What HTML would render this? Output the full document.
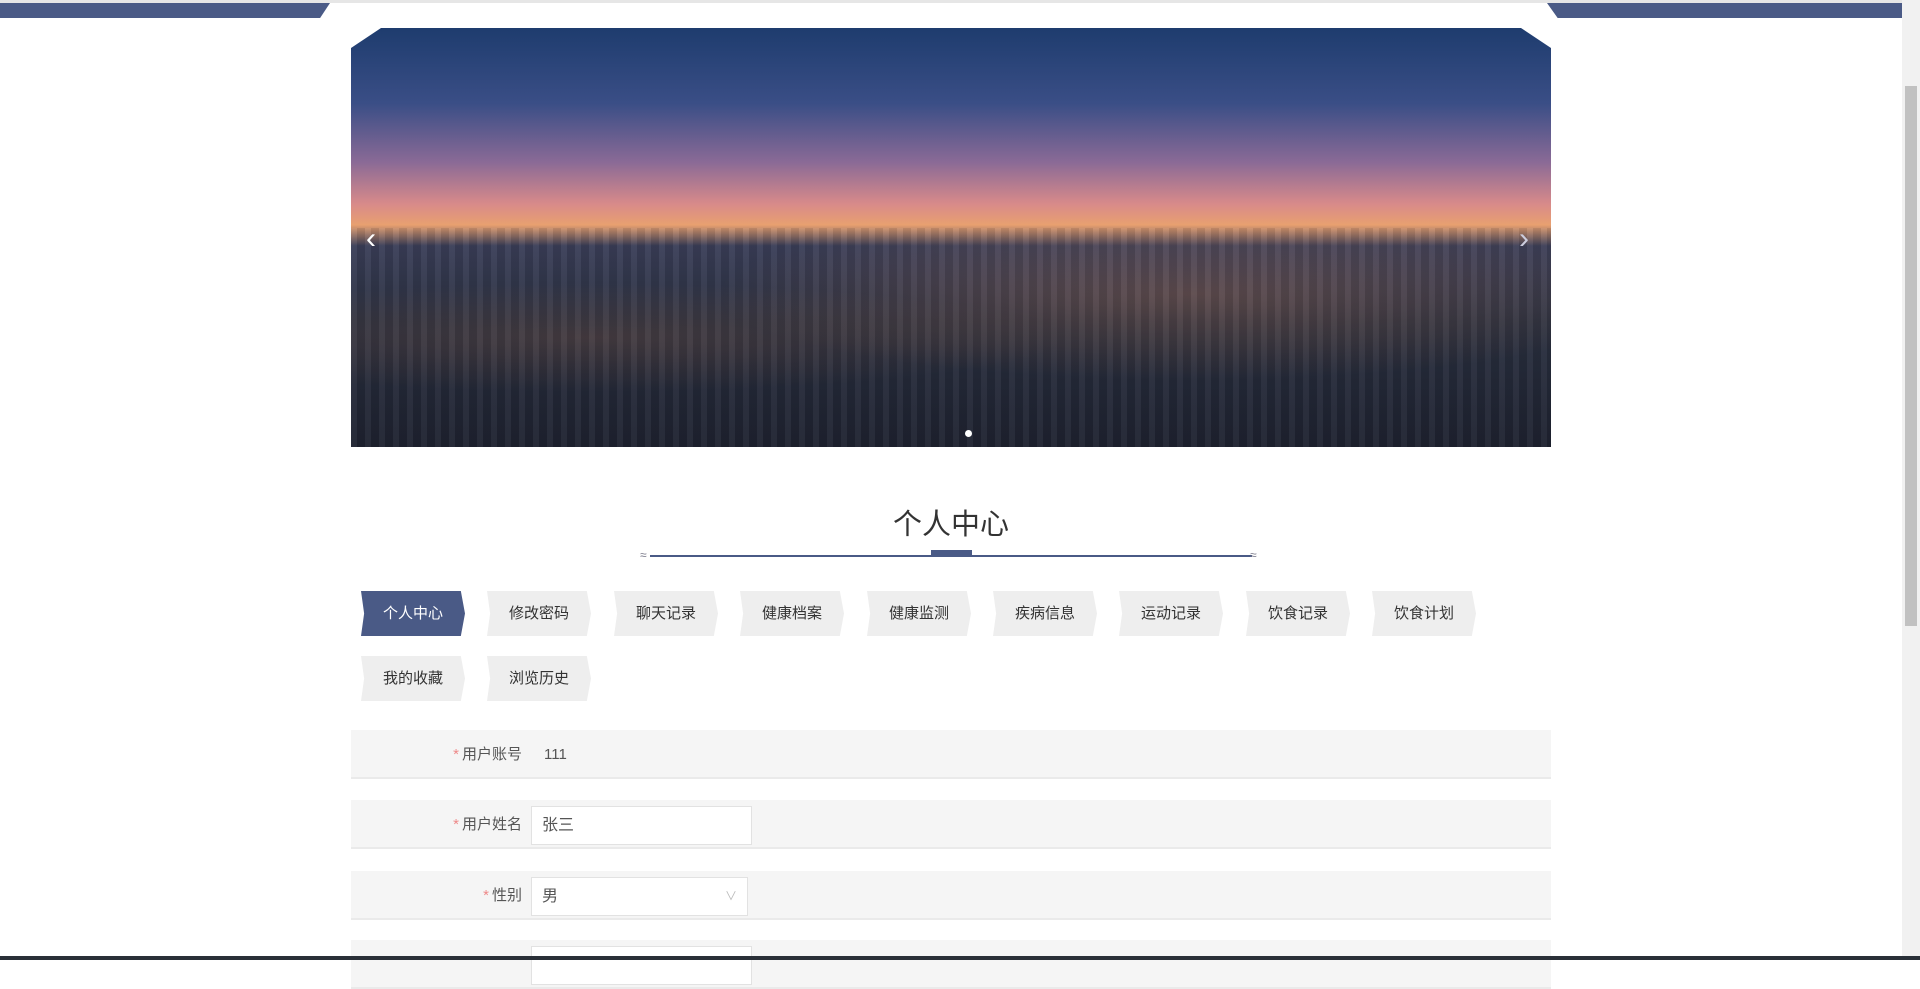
<!DOCTYPE html>
<html><head><meta charset="utf-8"><style>
*{margin:0;padding:0;box-sizing:border-box}
body{width:1920px;height:960px;overflow:hidden;background:#fff;font-family:"Liberation Sans","Noto Sans CJK SC",sans-serif;position:relative}
.abs{position:absolute}
.tab{position:absolute;width:104px;height:45px;background:#eeeeee;color:#333;font-size:15px;line-height:45px;text-align:center;clip-path:polygon(0 0,96% 0,100% 50%,96% 100%,0 100%,3% 50%)}
.tab.on{background:#4a5a86;color:#fff}
.row{position:absolute;left:351px;width:1200px;height:49px;background:#f5f5f5;border-bottom:2px solid #eaeaea}
.lab{position:absolute;right:1029px;top:0;line-height:49px;font-size:15px;color:#555;white-space:nowrap}
.lab b{color:#e88;font-weight:normal;margin-right:3px}
.inp{position:absolute;left:180px;top:6px;width:221px;height:39px;background:#fff;border:1px solid #e2e2e2;font-size:16px;color:#555;line-height:37px;padding-left:10px}
</style></head><body>
<div class="abs" style="left:0;top:0;width:1920px;height:3px;background:#e6e6e6"></div>
<div class="abs" style="left:0;top:3px;width:330px;height:15px;background:#4a5a86;clip-path:polygon(0 0,100% 0,97% 100%,0 100%)"></div>
<div class="abs" style="left:1547px;top:3px;width:355px;height:15px;background:#4a5a86;clip-path:polygon(0 0,100% 0,100% 100%,3% 100%)"></div>
<div class="abs" style="left:351px;top:28px;width:1200px;height:419px;clip-path:polygon(30px 0,1170px 0,1200px 20px,1200px 100%,0 100%,0 20px);background:linear-gradient(180deg,#1e3c6e 0%,#3a4e86 18%,#8a6a96 32%,#d88a8a 42%,#e8a070 47%,#3a3e58 52%,#2a3040 70%,#1e2230 100%)">
<div class="abs" style="left:0;top:200px;width:1200px;height:219px;background:repeating-linear-gradient(90deg,rgba(255,255,255,.04) 0 6px,rgba(0,0,0,.08) 6px 14px),radial-gradient(ellipse at 70% 30%,rgba(230,140,90,.25),transparent 40%),radial-gradient(ellipse at 20% 50%,rgba(200,120,80,.18),transparent 35%)"></div>
</div>
<div class="abs" style="left:366px;top:222px;color:#fff;font-size:30px">‹</div>
<div class="abs" style="left:1519px;top:222px;color:#ccd;font-size:30px">›</div>
<div class="abs" style="left:965px;top:430px;width:7px;height:7px;border-radius:50%;background:#fff"></div>
<div class="abs" style="left:0;top:501px;width:1902px;text-align:center;font-size:29px;color:#333">个人中心</div>
<div class="abs" style="left:650px;top:555px;width:602px;height:2px;background:#4a5a86"></div>
<div class="abs" style="left:931px;top:550px;width:41px;height:7px;background:#4a5a86"></div>
<div class="abs" style="left:640px;top:548px;color:#778;font-size:12px">≈</div>
<div class="abs" style="left:1250px;top:548px;color:#778;font-size:12px">≈</div>
<div class="tab on" style="left:361px;top:591px">个人中心</div>
<div class="tab" style="left:487px;top:591px">修改密码</div>
<div class="tab" style="left:614px;top:591px">聊天记录</div>
<div class="tab" style="left:740px;top:591px">健康档案</div>
<div class="tab" style="left:867px;top:591px">健康监测</div>
<div class="tab" style="left:993px;top:591px">疾病信息</div>
<div class="tab" style="left:1119px;top:591px">运动记录</div>
<div class="tab" style="left:1246px;top:591px">饮食记录</div>
<div class="tab" style="left:1372px;top:591px">饮食计划</div>
<div class="tab" style="left:361px;top:656px">我的收藏</div>
<div class="tab" style="left:487px;top:656px">浏览历史</div>
<div class="row" style="top:730px"><div class="lab"><b>*</b>用户账号</div><div class="abs" style="left:193px;line-height:49px;font-size:15px;color:#555">111</div></div>
<div class="row" style="top:800px"><div class="lab"><b>*</b>用户姓名</div><div class="inp">张三</div></div>
<div class="row" style="top:871px"><div class="lab"><b>*</b>性别</div><div class="inp" style="width:217px">男<span style="position:absolute;right:10px;color:#bbb;font-size:12px">∨</span></div></div>
<div class="row" style="top:940px"><div class="inp"></div></div>
<div class="abs" style="left:0;top:956px;width:1920px;height:4px;background:#2a3038"></div>
<div class="abs" style="left:1902px;top:0;width:18px;height:956px;background:#f1f1f1"></div>
<div class="abs" style="left:1905px;top:86px;width:12px;height:540px;background:#c1c1c1"></div>
</body></html>
